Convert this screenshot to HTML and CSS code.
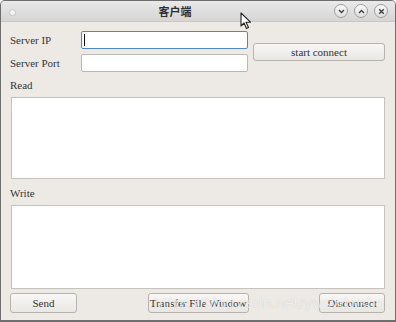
FILE: index.html
```html
<!DOCTYPE html>
<html lang="zh">
<head>
    <meta charset="UTF-8">
    <title>客户端</title>
    <link rel="stylesheet" href="styles.css">
</head>
<body>
    <div class="window">
        <div class="titlebar">
            <span class="menu-dot"></span>
            <span class="title">客户端</span>
            <div class="wm-buttons">
                <span class="wm-btn">
                    <svg width="7" height="5" viewBox="0 0 7 5"><path d="M1 1 L3.5 3.5 L6 1" fill="none" stroke="#3c3c3c" stroke-width="1.3"/></svg>
                </span>
                <span class="wm-btn">
                    <svg width="7" height="5" viewBox="0 0 7 5"><path d="M1 4 L3.5 1.5 L6 4" fill="none" stroke="#3c3c3c" stroke-width="1.3"/></svg>
                </span>
                <span class="wm-btn">
                    <svg width="7" height="7" viewBox="0 0 7 7"><path d="M1.2 1.2 L5.8 5.8 M5.8 1.2 L1.2 5.8" fill="none" stroke="#3c3c3c" stroke-width="1.3"/></svg>
                </span>
            </div>
        </div>

        <div class="content">
            <div class="connect-grid">
                <label class="lbl">Server IP</label>
                <div class="field focused"><span class="caret"></span></div>
                <button class="btn connect-btn" type="button">start connect</button>
                <label class="lbl">Server Port</label>
                <div class="field"></div>
            </div>

            <div class="section-label">Read</div>
            <div class="text-box read-box"></div>

            <div class="section-label write-label">Write</div>
            <div class="text-box write-box"></div>

            <div class="actions">
                <button class="btn send-btn" type="button">Send</button>
                <button class="btn transfer-btn" type="button">Transfer File Window</button>
                <button class="btn disconnect-btn" type="button">Disconnect</button>
            </div>
        </div>

        <div class="watermark">https://blog.csdn.net/ywsydwsbn</div>

        <svg class="cursor" width="13" height="18" viewBox="0 0 13 18">
            <path d="M1 1 L1 14 L4 11 L6.5 16.5 L8.5 15.5 L6 10.2 L10.5 10.2 Z" fill="#fff" stroke="#222" stroke-width="1.1" stroke-linejoin="round"/>
        </svg>
    </div>
</body>
</html>
```

FILE: styles.css
```css
* {
    box-sizing: border-box;
}

body {
    margin: 0;
    background-color: #ffffff;
    font-family: 'Liberation Serif', 'Noto Sans CJK SC', serif;
    color: #333333;
}

.window {
    position: relative;
    width: 396px;
    height: 322px;
    border: 1px solid #6e6e6e;
    border-bottom-width: 2px;
    border-radius: 5px 5px 0 0;
    background-color: #edeae6;
    overflow: hidden;
}

.titlebar {
    display: flex;
    align-items: center;
    height: 21px;
    padding: 0 7px 0 8px;
    background: linear-gradient(#e9e9e9, #d5d5d5);
    border-bottom: 1px solid #c9c7c3;
}

.menu-dot {
    width: 7px;
    height: 7px;
    border-radius: 50%;
    background: #f4f4f4;
    border: 1px solid #c4c4c4;
    margin-top: 3px;
}

.title {
    flex: 1;
    text-align: center;
    font-family: 'Noto Sans CJK SC', sans-serif;
    font-weight: bold;
    font-size: 11px;
    color: #2e2e2e;
}

.wm-buttons {
    display: flex;
    gap: 6px;
}

.wm-btn {
    display: flex;
    align-items: center;
    justify-content: center;
    width: 14px;
    height: 14px;
    border-radius: 50%;
    border: 1px solid #9d9d9d;
    background: linear-gradient(#fafafa, #dedede);
}

.content {
    padding: 9px 10px 0 9px;
}

.connect-grid {
    display: grid;
    grid-template-columns: 66px 167px 132px;
    grid-template-rows: 18px 18px;
    column-gap: 5px;
    row-gap: 5px;
    align-items: center;
}

.lbl {
    font-size: 11px;
    color: #363636;
}

.field {
    height: 18px;
    background: #ffffff;
    border: 1px solid #bdb8b1;
    border-radius: 2px;
    display: flex;
    align-items: center;
    padding-left: 2px;
}

.field.focused {
    border-color: #4f8ac4;
}

.caret {
    width: 1px;
    height: 12px;
    background: #111111;
}

.btn {
    font-family: 'Liberation Serif', serif;
    font-size: 11px;
    color: #333333;
    height: 20px;
    padding: 0;
    border: 1px solid #b7b3ad;
    border-radius: 3px;
    background: linear-gradient(#f8f7f5, #e9e7e4);
}

.connect-btn {
    grid-column: 3;
    grid-row: 1 / span 2;
    height: 18px;
}

.section-label {
    font-size: 11px;
    color: #363636;
    line-height: 14px;
    margin: 6px 0 5px 0;
}

.write-label {
    margin-top: 7px;
}

.text-box {
    margin-left: 1px;
    height: 82px;
    background: #ffffff;
    border: 1px solid #c6c3be;
}

.read-box {
    margin-bottom: 1px;
}

.write-box {
    height: 84px;
}

.actions {
    display: flex;
    justify-content: space-between;
    margin: 4px 0 0 0;
}

.send-btn {
    width: 67px;
}

.transfer-btn {
    width: 101px;
}

.disconnect-btn {
    width: 66px;
}

.watermark {
    position: absolute;
    left: 153px;
    top: 294px;
    font-family: 'DejaVu Sans', sans-serif;
    font-size: 14px;
    color: rgba(255, 255, 255, 0.75);
    text-shadow: 0 0 1px rgba(0, 0, 0, 0.2);
    pointer-events: none;
}

.cursor {
    position: absolute;
    left: 239px;
    top: 11px;
}
```
